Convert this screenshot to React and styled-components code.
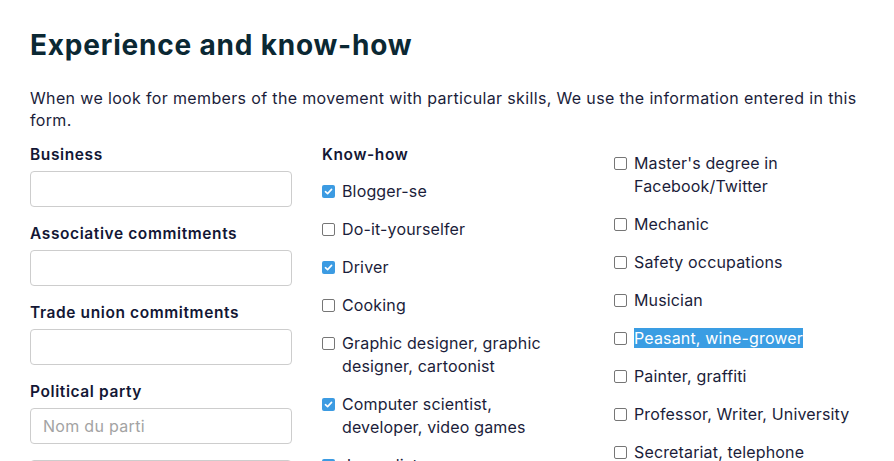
import React from "react";
import styled, { createGlobalStyle } from "styled-components";

const GlobalStyle = createGlobalStyle`
  html, body {
    margin: 0;
    padding: 0;
    background: #ffffff;
  }
  body {
    font-family: Inter, "Noto Sans", sans-serif;
    color: #1b1d3a;
  }
  * { box-sizing: border-box; }
`;

const fields = [
  { label: "Business" },
  { label: "Associative commitments" },
  { label: "Trade union commitments" },
  { label: "Political party", placeholder: "Nom du parti" },
  { label: "" },
];

const knowHow = [
  { text: "Blogger-se", checked: true },
  { text: "Do-it-yourselfer" },
  { text: "Driver", checked: true },
  { text: "Cooking" },
  { text: "Graphic designer, graphic designer, cartoonist" },
  { text: "Computer scientist, developer, video games", checked: true },
  { text: "Journalist", checked: true },
];

const moreKnowHow = [
  { text: "Master's degree in Facebook/Twitter" },
  { text: "Mechanic" },
  { text: "Safety occupations" },
  { text: "Musician" },
  { text: "Peasant, wine-grower", selected: true },
  { text: "Painter, graffiti" },
  { text: "Professor, Writer, University" },
  { text: "Secretariat, telephone" },
];

const Check = ({ checked }) => (
  <Box $checked={checked}>
    {checked && (
      <svg width="9" height="9" viewBox="0 0 10 10">
        <path
          d="M1.6 5.2 L4 7.4 L8.4 2.6"
          fill="none"
          stroke="#fff"
          strokeWidth="1.8"
          strokeLinecap="round"
          strokeLinejoin="round"
        />
      </svg>
    )}
  </Box>
);

const Option = ({ text, checked, selected }) => (
  <OptionRow>
    <Check checked={checked} />
    <OptionText>{selected ? <Selected>{text}</Selected> : text}</OptionText>
  </OptionRow>
);

const App = () => (
  <Page>
    <GlobalStyle />
    <Title>Experience and know-how</Title>
    <Intro>
      When we look for members of the movement with particular skills, We use
      the information entered in this form.
    </Intro>
    <Columns>
      <Column>
        {fields.map((f, i) => (
          <Field key={i}>
            {f.label && <Label>{f.label}</Label>}
            <Input placeholder={f.placeholder || ""} />
          </Field>
        ))}
      </Column>
      <Column>
        <Label>Know-how</Label>
        <OptionList $top={9}>
          {knowHow.map((o) => (
            <Option key={o.text} {...o} />
          ))}
        </OptionList>
      </Column>
      <Column>
        <OptionList $top={8}>
          {moreKnowHow.map((o) => (
            <Option key={o.text} {...o} />
          ))}
        </OptionList>
      </Column>
    </Columns>
  </Page>
);

const Page = styled.div`
  padding: 26px 18px 0 30px;
  height: 461px;
  overflow: hidden;
`;

const Title = styled.h1`
  margin: 0;
  font-size: 28px;
  line-height: 38px;
  font-weight: 750;
  color: #0b2833;
  letter-spacing: 0.8px;
`;

const Intro = styled.p`
  margin: 23px 0 0;
  font-size: 16px;
  line-height: 22px;
  letter-spacing: 0.35px;
  color: #1b1d3a;
`;

const Columns = styled.div`
  display: grid;
  grid-template-columns: 262px 262px 262px;
  column-gap: 30px;
  margin-top: 13px;
`;

const Column = styled.div`
  display: flex;
  flex-direction: column;
`;

const Field = styled.div`
  display: flex;
  flex-direction: column;
  margin-bottom: 16px;
`;

const Label = styled.div`
  font-size: 15.5px;
  line-height: 22px;
  font-weight: 600;
  letter-spacing: 0.6px;
  color: #131735;
  margin-bottom: 5px;
`;

const Input = styled.input`
  width: 262px;
  height: 36px;
  border: 1px solid #cdcdcd;
  border-radius: 4px;
  padding: 0 12px;
  font-family: inherit;
  font-size: 16px;
  letter-spacing: 0.3px;
  color: #1b1d3a;
  outline: none;
  &::placeholder {
    color: #a3a3a3;
  }
`;

const OptionList = styled.div`
  display: flex;
  flex-direction: column;
  gap: 15px;
  margin-top: ${(p) => p.$top}px;
`;

const OptionRow = styled.div`
  display: flex;
  align-items: flex-start;
  gap: 7px;
`;

const Box = styled.span`
  flex: none;
  width: 13px;
  height: 13px;
  margin-top: 5px;
  border-radius: 2px;
  display: flex;
  align-items: center;
  justify-content: center;
  background: ${(p) => (p.$checked ? "#3c9be2" : "#fff")};
  border: ${(p) => (p.$checked ? "none" : "1.5px solid #767676")};
`;

const OptionText = styled.span`
  max-width: 228px;
  font-size: 16px;
  line-height: 23px;
  letter-spacing: 0.15px;
  color: #1b1d3a;
`;

const Selected = styled.span`
  background: #3a9de3;
  color: #ffffff;
`;

export default App;
